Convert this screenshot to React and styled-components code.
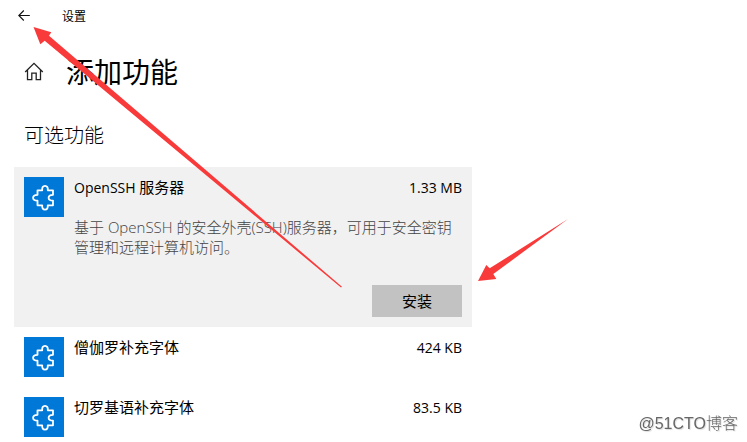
import React, {useState} from 'react';
import styled, {createGlobalStyle} from 'styled-components';

const features = [
    {
        id: 'openssh',
        name: 'OpenSSH 服务器',
        size: '1.33 MB',
        description: '基于 OpenSSH 的安全外壳(SSH)服务器，可用于安全密钥管理和远程计算机访问。'
    },
    {id: 'sinhala', name: '僧伽罗补充字体', size: '424 KB'},
    {id: 'cherokee', name: '切罗基语补充字体', size: '83.5 KB'}
];

export default function App() {
    const [openId, setOpenId] = useState('openssh');

    return (
        <Page>
            <GlobalStyle/>

            <TitleBar>
                <BackButton type="button" aria-label="返回">
                    <BackIcon/>
                </BackButton>
                <WindowTitle>设置</WindowTitle>
            </TitleBar>

            <Header>
                <HomeIcon/>
                <Heading>添加功能</Heading>
            </Header>

            <SubHeading>可选功能</SubHeading>

            <FeatureList>
                {features.map(feature =>
                    <Feature
                        key={feature.id}
                        feature={feature}
                        open={feature.id === openId}
                        onSelect={() => setOpenId(feature.id)}
                    />
                )}
            </FeatureList>

            <Arrows/>
            <Watermark>@51CTO博客</Watermark>
        </Page>
    )
}

function Feature({feature, open, onSelect}) {
    return (
        <FeatureItem $open={open} onClick={onSelect}>
            <FeatureIcon>
                <PuzzleIcon/>
            </FeatureIcon>
            <FeatureBody>
                <FeatureTop>
                    <span><MixedText text={feature.name}/></span>
                    <Latin>{feature.size}</Latin>
                </FeatureTop>
                {open && feature.description && <Description>{feature.description}</Description>}
                {open && <InstallButton type="button">安装</InstallButton>}
            </FeatureBody>
        </FeatureItem>
    )
}

// latin words are set a bit smaller than the chinese text beside them
function MixedText({text}) {
    return text.split(/([A-Za-z]+ ?)/).map((part, key) =>
        key % 2 ? <Latin key={key}>{part}</Latin> : part
    )
}

// icons
function BackIcon() {
    return (
        <svg width="12" height="12" viewBox="0 0 12 12" fill="none" stroke="#111" strokeWidth="1.1">
            <path d="M11.8 5.5H.8M5.8.5l-5 5 5 5"/>
        </svg>
    )
}

function HomeIcon() {
    return (
        <svg width="20" height="20" viewBox="0 0 20 20" fill="none" stroke="#222" strokeWidth="1.3">
            <path d="M1.2 11L10 2.4l8.8 8.6M3.5 9v9.6h4.3v-6.4h4.4v6.4h4.3V9"/>
        </svg>
    )
}

function PuzzleIcon() {
    return (
        <svg width="40" height="40" viewBox="0 0 40 40" fill="none" stroke="#fff" strokeWidth="1.8" strokeLinejoin="round">
            <path d="M29 13.3h-5.2c.2-3-.6-4.4-2.8-4.4s-3 1.4-2.8 4.4H13.5v4.5c-2.8 0-4.4.8-4.4 2.9s1.6 2.9 4.4 2.9v4.7h4.7c-.2 2.8.6 4.4 2.8 4.4s3-1.6 2.8-4.4H29v-4.7c-2.8 0-4.4-.8-4.4-2.9s1.6-2.9 4.4-2.9z"/>
        </svg>
    )
}

function Arrows() {
    return (
        <ArrowLayer width="747" height="442" viewBox="0 0 747 442" fill="#f93a3a" aria-hidden="true">
            <path d="M33.5 27L51.3 32.3L49 35.7L342 286.8L341 287.6L44.7 40.7L40.3 44.3z"/>
            <path d="M478 281L486.3 265L489.7 268.3L568 219L493.3 274L496.3 279z"/>
        </ArrowLayer>
    )
}

// styles
const GlobalStyle = createGlobalStyle`
    * {
        box-sizing: border-box;
    }

    body {
        margin: 0;
        overflow: hidden;
        background: #fff;
        color: #000;
        font-family: "Noto Sans CJK SC", sans-serif;
        font-size: 15px;
        line-height: 20px;
    }
`;

const Page = styled.div`
    position: relative;
`;

const TitleBar = styled.header`
    display: flex;
    align-items: center;
    gap: 26px;
    height: 32px;
    padding: 0 12px;
`;

const BackButton = styled.button`
    display: flex;
    align-items: center;
    justify-content: center;
    width: 24px;
    height: 24px;
    padding: 0;
    border: 0;
    background: none;
`;

const WindowTitle = styled.span`
    font-size: 12px;
`;

const Header = styled.div`
    display: flex;
    align-items: center;
    gap: 22px;
    padding: 19px 24px 20px;
`;

const Heading = styled.h1`
    margin: 0;
    font-size: 28px;
    font-weight: 400;
    line-height: 40px;
`;

const SubHeading = styled.h2`
    margin: 8px 24px 16px;
    font-size: 20px;
    font-weight: 300;
    line-height: 32px;
`;

const FeatureList = styled.ul`
    max-width: 486px;
    margin: 0;
    padding: 0 14px;
    font-family: "Open Sans", "Noto Sans CJK SC", sans-serif;
    list-style: none;
`;

const FeatureItem = styled.li`
    display: flex;
    gap: 10px;
    padding: 10px;
    background: ${props => props.$open ? '#f1f1f1' : '#fff'};
`;

const FeatureIcon = styled.div`
    flex: none;
    width: 40px;
    height: 40px;
    background: #0078d7;
`;

const FeatureBody = styled.div`
    display: flex;
    flex: 1;
    flex-direction: column;
`;

const FeatureTop = styled.div`
    display: flex;
    align-items: baseline;
    justify-content: space-between;
    height: 20px;
`;

const Latin = styled.span`
    font-size: 14px;
`;

const Description = styled.p`
    margin: 20px 0 28px;
    padding-right: 8px;
    color: #444;
    font-weight: 300;
`;

const InstallButton = styled.button`
    align-self: flex-end;
    width: 90px;
    height: 32px;
    padding: 0;
    border: 0;
    background: #c2c2c2;
    color: #000;
    font: inherit;
`;

const ArrowLayer = styled.svg`
    position: absolute;
    top: 0;
    left: 0;
    pointer-events: none;
`;

const Watermark = styled.div`
    position: fixed;
    right: 9px;
    bottom: 8px;
    color: #666;
    font-family: "Liberation Sans", "Noto Sans CJK SC", sans-serif;
    font-size: 16px;
    font-weight: 300;
    text-shadow: 1px 1px 1px #ddd;
`;
